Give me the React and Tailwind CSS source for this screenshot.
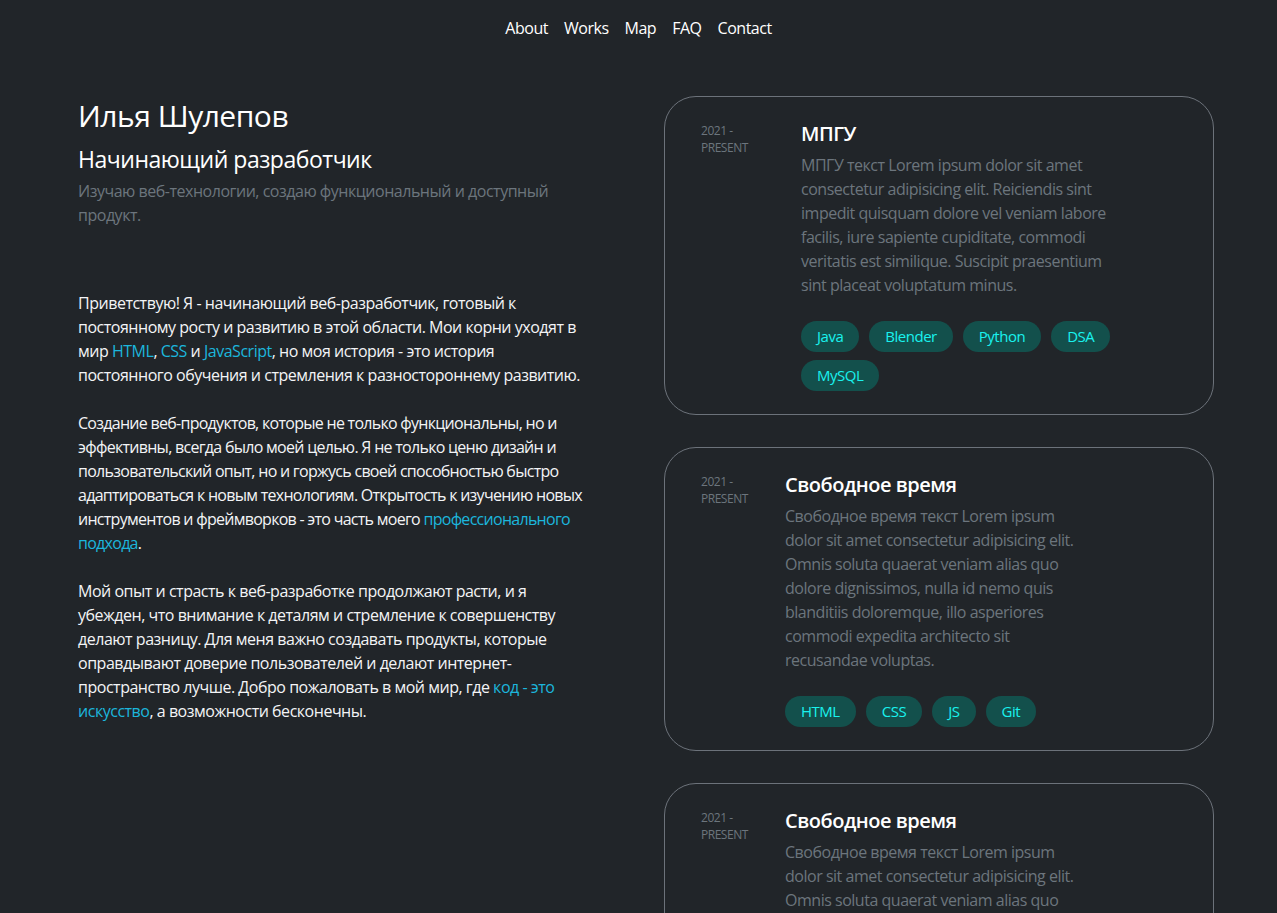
const navItems = ["About", "Works", "Map", "FAQ", "Contact"]

const works = [
  {
    date: ["2021 -", "PRESENT"],
    title: "МПГУ",
    text: "МПГУ текст Lorem ipsum dolor sit amet consectetur adipisicing elit. Reiciendis sint impedit quisquam dolore vel veniam labore facilis, iure sapiente cupiditate, commodi veritatis est similique. Suscipit praesentium sint placeat voluptatum minus.",
    tags: ["Java", "Blender", "Python", "DSA", "MySQL"],
    body: "ml-[52px] w-[320px]",
  },
  {
    date: ["2021 -", "PRESENT"],
    title: "Свободное время",
    text: "Свободное время текст Lorem ipsum dolor sit amet consectetur adipisicing elit. Omnis soluta quaerat veniam alias quo dolore dignissimos, nulla id nemo quis blanditiis doloremque, illo asperiores commodi expedita architecto sit recusandae voluptas.",
    tags: ["HTML", "CSS", "JS", "Git"],
    body: "ml-[36px] w-[305px]",
  },
  {
    date: ["2021 -", "PRESENT"],
    title: "Свободное время",
    text: "Свободное время текст Lorem ipsum dolor sit amet consectetur adipisicing elit. Omnis soluta quaerat veniam alias quo dolore dignissimos, nulla id nemo quis blanditiis doloremque, illo asperiores commodi expedita architecto sit recusandae voluptas.",
    tags: ["HTML", "CSS", "JS", "Git"],
    body: "ml-[36px] w-[305px]",
  },
]

function A({ children }) {
  return <a href="#" className="text-[#1cb6dc]">{children}</a>
}

function WorkCard({ work }) {
  return (
    <div className="flex rounded-[32px] border border-[#6c727a] px-9 pt-[23px] pb-[23px]">
      <div className="w-12 shrink-0 pt-[2px] text-[12px] leading-[17px] text-[#6c757d]">
        {work.date[0]}
        <br />
        {work.date[1]}
      </div>
      <div className={work.body}>
        <h3 className="text-[20px] font-semibold leading-7 text-white">{work.title}</h3>
        <p className="mt-[5px] text-[16px] leading-6 text-[#6c757d]">{work.text}</p>
        <div className="mt-6 flex flex-wrap gap-x-[10px] gap-y-2">
          {work.tags.map((t) => (
            <span key={t} className="rounded-full bg-[#13504c] px-4 text-[15px] leading-[31px] text-[#19f2ee]">
              {t}
            </span>
          ))}
        </div>
      </div>
    </div>
  )
}

export default function App() {
  return (
    <div className="min-h-screen bg-[#212529] font-['Open_Sans',sans-serif] tracking-[-0.03em] text-white">
      <nav className="flex justify-center gap-4 pt-4 text-[16px] leading-6">
        {navItems.map((n) => (
          <a key={n} href="#" className="text-white">
            {n}
          </a>
        ))}
      </nav>
      <main className="flex gap-[74px] pl-[78px] pt-[56px]">
        <section className="w-[512px] shrink-0 pt-[2px]">
          <h1 className="text-[30px] leading-9">Илья Шулепов</h1>
          <h2 className="mt-[11px] text-[23px] leading-7">Начинающий разработчик</h2>
          <p className="mt-[6px] text-[16px] leading-6 text-[#6c757d]">
            Изучаю веб-технологии, создаю функциональный и доступный продукт.
          </p>
          <div className="mt-[64px] text-[16px] leading-6 text-[#f3f4f6]">
            <p className="mb-6">
              Приветствую! Я - начинающий веб-разработчик, готовый к постоянному росту и развитию в этой области. Мои
              корни уходят в мир <A>HTML</A>, <A>CSS</A> и <A>JavaScript</A>, но моя история - это история постоянного
              обучения и стремления к разностороннему развитию.
            </p>
            <p className="mb-6 tracking-[-0.045em]">
              Создание веб-продуктов, которые не только функциональны, но и эффективны, всегда было моей целью. Я не
              только ценю дизайн и пользовательский опыт, но и горжусь своей способностью быстро адаптироваться к новым
              технологиям. Открытость к изучению новых инструментов и фреймворков - это часть моего{" "}
              <A>профессионального подхода</A>.
            </p>
            <p>
              Мой опыт и страсть к веб-разработке продолжают расти, и я убежден, что внимание к деталям и стремление к
              совершенству делают разницу. Для меня важно создавать продукты, которые оправдывают доверие пользователей и
              делают интернет-пространство лучше. Добро пожаловать в мой мир, где <A>код - это искусство</A>, а
              возможности бесконечны.
            </p>
          </div>
        </section>
        <section className="flex w-[550px] shrink-0 flex-col gap-[32px]">
          {works.map((w, i) => (
            <WorkCard key={i} work={w} />
          ))}
        </section>
      </main>
    </div>
  )
}
